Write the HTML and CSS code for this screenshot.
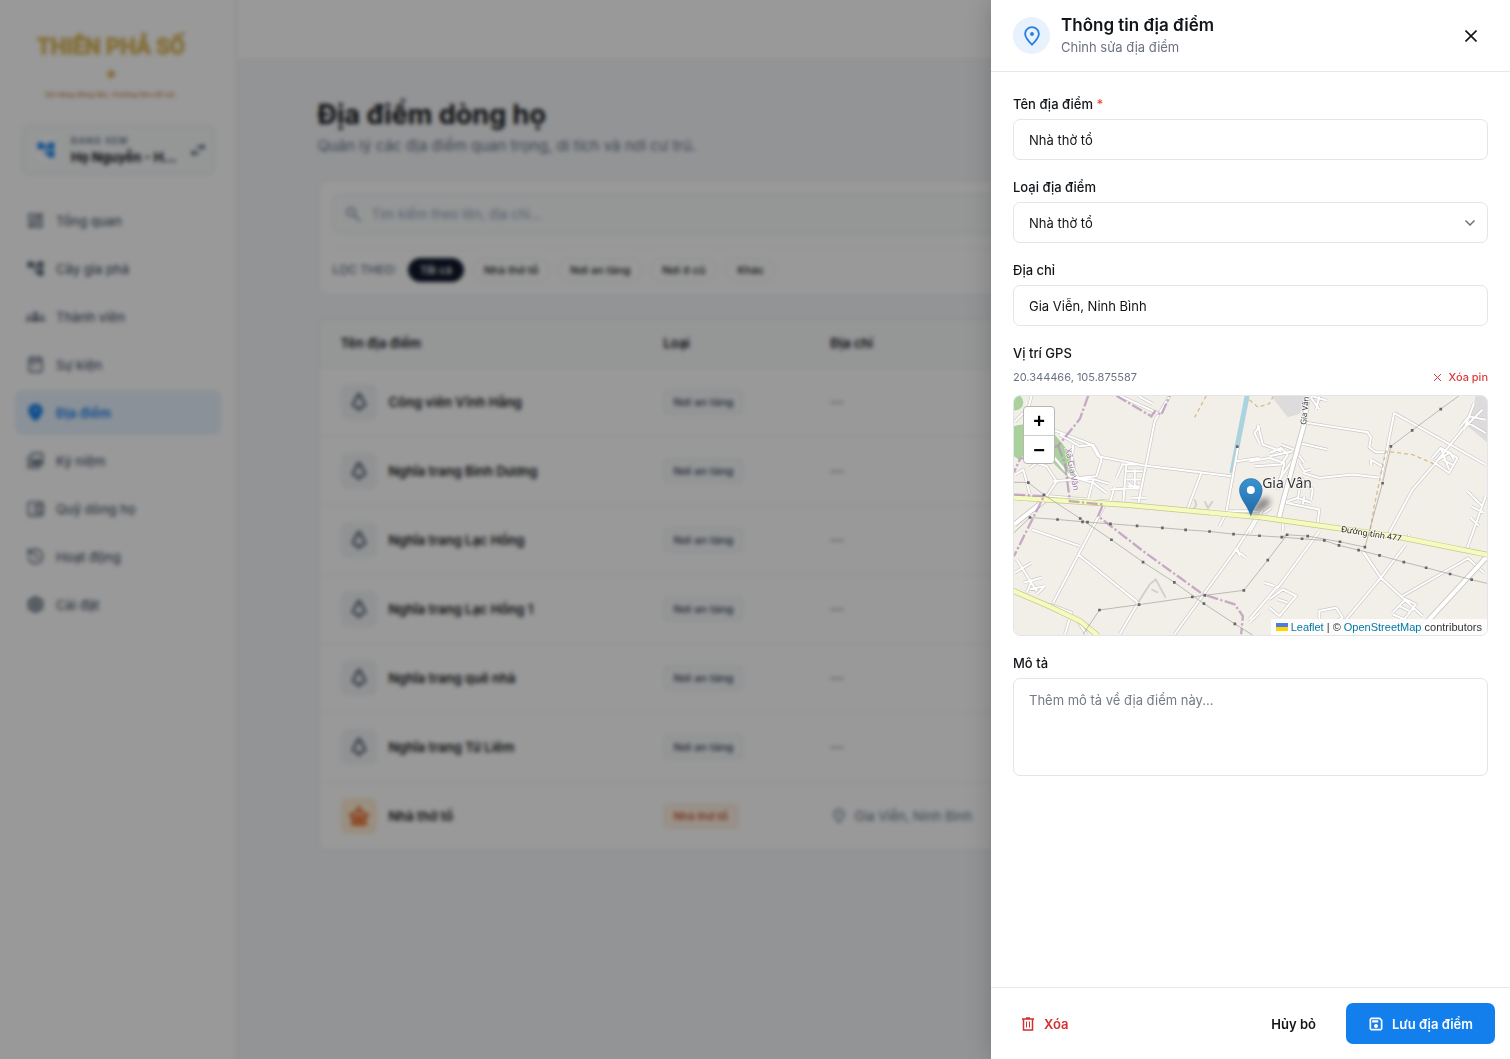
FILE: index.html
```html
<!DOCTYPE html>
<html lang="vi">
<head>
<meta charset="utf-8">
<meta name="viewport" content="width=device-width, initial-scale=1">
<title>Địa điểm dòng họ</title>
<link rel="stylesheet" href="styles.css">
</head>
<body>
<svg class="sprite" aria-hidden="true">
  <symbol id="i-tree" viewBox="0 0 24 24"><path fill="currentColor" d="M22 11V3h-7v3H9V3H2v8h7V8h2v10h4v3h7v-8h-7v3h-2V8h2v3h7z"/></symbol>
  <symbol id="i-grave" viewBox="0 0 24 24"><path fill="none" stroke="currentColor" stroke-width="2.4" stroke-linejoin="round" d="M12 3l4 5.500h-1l4 6.500-3.500 3h-7L5 15l4-6.500H8zM12 18v4"/></symbol>
  <symbol id="i-pin" viewBox="0 0 24 24"><path fill="none" stroke="currentColor" stroke-width="2" d="M12 21.500C7.500 17 4.500 13.500 4.500 9.800a7.500 7.500 0 0 1 15 0c0 3.700-3 7.200-7.500 11.700z"/><circle cx="12" cy="9.800" r="2.100" fill="currentColor"/></symbol>
</svg>

<div class="app">
  <aside class="sidebar">
    <div class="brand">
      <div class="brand-name">THIÊN PHẢ SỐ</div>
      <div class="brand-rule"><span>◆</span></div>
      <div class="brand-line">Sổ vàng dòng tộc, Trường tồn cõi số.</div>
    </div>
    <button class="clan" type="button">
      <span class="clan-icon"><svg width="20" height="20"><use href="#i-tree"/></svg></span>
      <span class="clan-text"><small>ĐANG XEM</small><strong>Họ Nguyễn - H...</strong></span>
      <svg width="14" height="14" viewBox="0 0 14 14" fill="none" stroke="currentColor" stroke-width="2"><path d="M6 4h7M11 2l2 2-2 2M8 10H1M3 8l-2 2 2 2"/></svg>
    </button>
    <nav class="nav">
      <a href="#"><svg viewBox="0 0 24 24"><path fill="currentColor" d="M19 5v2h-4V5h4M9 5v6H5V5h4m10 8v6h-4v-6h4M9 17v2H5v-2h4M21 3h-8v6h8V3zM11 3H3v10h8V3zm10 8h-8v10h8V11zm-10 4H3v6h8v-6z"/></svg>Tổng quan</a>
      <a href="#"><svg viewBox="0 0 24 24"><use href="#i-tree"/></svg>Cây gia phả</a>
      <a href="#"><svg viewBox="0 0 24 24"><path fill="currentColor" d="M12 6a3 3 0 1 1 0 6 3 3 0 0 1 0-6zM6 18v-2c0-2 3-3 6-3s6 1 6 3v2zM4 9a2 2 0 1 1 0 4 2 2 0 0 1 0-4zM0 18v-2c0-1.500 2-2 4.500-2v4zM20 9a2 2 0 1 1 0 4 2 2 0 0 1 0-4zM24 18v-2c0-1.500-2-2-4.500-2v4z"/></svg>Thành viên</a>
      <a href="#"><svg viewBox="0 0 24 24" fill="none" stroke="currentColor" stroke-width="2"><rect x="4" y="4" width="16" height="17" rx="1"/><path d="M4 8h16M8 1v4M16 1v4M8 13h5"/></svg>Sự kiện</a>
      <a href="#" class="active"><svg viewBox="0 0 24 24"><path fill="currentColor" fill-rule="evenodd" d="M12 1C7 1 3 5 3 10c0 6 9 13 9 13s9-7 9-13c0-5-4-9-9-9zm0 6a2 2 0 1 1 0 4 2 2 0 0 1 0-4z"/></svg>Địa điểm</a>
      <a href="#"><svg viewBox="0 0 24 24" fill="none" stroke="currentColor" stroke-width="2"><rect x="7" y="3" width="14" height="14" rx="1"/><path d="M3 6v15h15M9 15l3-4 2 2 2-3 3 5z"/></svg>Kỷ niệm</a>
      <a href="#"><svg viewBox="0 0 24 24" fill="none" stroke="currentColor" stroke-width="2"><rect x="3" y="4" width="18" height="17" rx="1"/><path d="M12 8h9v9h-9zM16 11v3"/></svg>Quỹ dòng họ</a>
      <a href="#"><svg viewBox="0 0 24 24" fill="none" stroke="currentColor" stroke-width="2"><path d="M3 12a9 9 0 1 0 3-7L3 8M3 2v6h6M12 7v5l4 3"/></svg>Hoạt động</a>
      <a href="#"><svg viewBox="0 0 24 24" fill="none" stroke="currentColor"><path stroke-width="3" d="M12 3l8 4.500v9L12 21l-8-4.500v-9z"/><circle cx="12" cy="12" r="3" stroke-width="3"/></svg>Cài đặt</a>
    </nav>
  </aside>

  <div class="page">
    <header class="topbar"></header>
    <main class="content">
      <h1>Địa điểm dòng họ</h1>
      <p class="lead">Quản lý các địa điểm quan trọng, di tích và nơi cư trú.</p>

      <section class="card filters">
        <label class="search">
          <svg width="16" height="16" viewBox="0 0 16 16" fill="none" stroke="currentColor" stroke-width="2"><circle cx="6" cy="6" r="4"/><path d="M9 9l6 6"/></svg>
          <input type="search" placeholder="Tìm kiếm theo tên, địa chỉ..." aria-label="Tìm kiếm">
        </label>
        <div class="chips">
          <span>LỌC THEO:</span>
          <button type="button" class="on">Tất cả</button>
          <button type="button">Nhà thờ tổ</button>
          <button type="button">Nơi an táng</button>
          <button type="button">Nơi ở cũ</button>
          <button type="button">Khác</button>
        </div>
      </section>

      <section class="card">
        <table class="places">
          <thead><tr><th class="c-name">Tên địa điểm</th><th class="c-type">Loại</th><th>Địa chỉ</th></tr></thead>
          <tbody>
            <tr><td><div class="name"><span class="tile"><svg width="22" height="22"><use href="#i-grave"/></svg></span>Công viên Vĩnh Hằng</div></td><td><span class="tag">Nơi an táng</span></td><td>—</td></tr>
            <tr><td><div class="name"><span class="tile"><svg width="22" height="22"><use href="#i-grave"/></svg></span>Nghĩa trang Bình Dương</div></td><td><span class="tag">Nơi an táng</span></td><td>—</td></tr>
            <tr><td><div class="name"><span class="tile"><svg width="22" height="22"><use href="#i-grave"/></svg></span>Nghĩa trang Lạc Hồng</div></td><td><span class="tag">Nơi an táng</span></td><td>—</td></tr>
            <tr><td><div class="name"><span class="tile"><svg width="22" height="22"><use href="#i-grave"/></svg></span>Nghĩa trang Lạc Hồng 1</div></td><td><span class="tag">Nơi an táng</span></td><td>—</td></tr>
            <tr><td><div class="name"><span class="tile"><svg width="22" height="22"><use href="#i-grave"/></svg></span>Nghĩa trang quê nhà</div></td><td><span class="tag">Nơi an táng</span></td><td>—</td></tr>
            <tr><td><div class="name"><span class="tile"><svg width="22" height="22"><use href="#i-grave"/></svg></span>Nghĩa trang Từ Liêm</div></td><td><span class="tag">Nơi an táng</span></td><td>—</td></tr>
            <tr><td><div class="name"><span class="tile warm"><svg width="22" height="22" viewBox="0 0 24 24" fill="none" stroke="currentColor" stroke-width="2.500"><path d="M1 11c4 0 8-3 11-8 3 5 7 8 11 8M5 11v10h14V11M5 14h14M12 8v6M9 21v-4h6v4"/></svg></span>Nhà thờ tổ</div></td><td><span class="tag warm">Nhà thờ tổ</span></td><td><div class="addr"><svg width="16" height="16"><use href="#i-pin"/></svg>Gia Viễn, Ninh Bình</div></td></tr>
          </tbody>
        </table>
      </section>
    </main>
  </div>
</div>

<div class="overlay"></div>

<form class="drawer" role="dialog" aria-labelledby="drawer-title">
  <header class="drawer-head">
    <span class="badge"><svg width="22" height="22"><use href="#i-pin"/></svg></span>
    <div class="drawer-titles">
      <h2 id="drawer-title">Thông tin địa điểm</h2>
      <p>Chỉnh sửa địa điểm</p>
    </div>
    <button class="close" type="button" aria-label="Đóng"><svg width="12" height="12" viewBox="0 0 12 12" stroke="currentColor" stroke-width="1.600"><path d="M.5.500l11 11M11.500.500l-11 11"/></svg></button>
  </header>

  <div class="drawer-body">
    <div class="field">
      <label for="name">Tên địa điểm <em>*</em></label>
      <input id="name" type="text" value="Nhà thờ tổ">
    </div>
    <div class="field">
      <label for="type">Loại địa điểm</label>
      <div class="select">
        <select id="type"><option>Nhà thờ tổ</option><option>Nơi an táng</option><option>Nơi ở cũ</option><option>Khác</option></select>
        <svg width="10" height="6" viewBox="0 0 10 6" fill="none" stroke="currentColor" stroke-width="1.500"><path d="M.5.500L5 5 9.500.500"/></svg>
      </div>
    </div>
    <div class="field">
      <label for="address">Địa chỉ</label>
      <input id="address" type="text" value="Gia Viễn, Ninh Bình">
    </div>
    <div class="field">
      <span class="label">Vị trí GPS</span>
      <div class="coords">
        <span>20.344466, 105.875587</span>
        <button type="button"><svg width="9" height="9" viewBox="0 0 9 9" stroke="currentColor"><path d="M1 1l7 7M8 1L1 8"/></svg>Xóa pin</button>
      </div>
      <div class="map">
        <svg class="map-canvas" viewBox="12 18 1422 720" preserveAspectRatio="xMidYMid slice" role="img" aria-label="Bản đồ Gia Vân">
          <defs>
            <linearGradient id="pinfill" x1="0" y1="0" x2="0" y2="1"><stop offset="0" stop-color="#3a94d0"/><stop offset="1" stop-color="#2268a8"/></linearGradient>
            <filter id="soft" x="-50%" y="-50%" width="200%" height="200%"><feGaussianBlur stdDeviation="9"/></filter>
            <g id="lanes" fill="none" stroke-linejoin="round">
              <path d="M65 18L55 55 15 95M60 235l20-15M80 220l30 10 30 45-30 45M15 255l25-15 20 75M115 115l130 50 20 35 140 28 165 20 95 12M150 135l60 35 40-5 25 45-15 50-55 5-20-40 5-60M130 200l50 60 70 20 40 30M130 275l60-5M205 265l45 5-15 60M248 268l50 15M340 220l-20 45M350 222l-10 125M335 225h55M345 245h55M350 270h45M355 290h35M300 300l90-5M315 290l-15 50M365 325h45M375 240v60M355 280l30 20M480 18L435 95 385 345M575 250l-40 105M330 18l120 55M385 18l45 25M685 175L650 370 630 410M680 215l70-10M750 110l-15 20 15 30M655 365h90M130 640L285 345M65 420l145 50M205 495l180 145M205 495l15-25M495 735L680 480 740 385M675 480l35 25M685 480l5 20M330 735L385 640M20 510l60 95M15 550l50-30M40 580l55-15M60 600l45-10M50 610l15-35M80 615l25-25M120 645l65 25-20 65M200 690l30 45M720 700l30-30M120 320l170 15 60 10 120 15"/>
              <g transform="translate(720 0)">
                <path d="M25 105l15 60 55 20M60 190l35-15 20 20-20 30-80 5M0 215l60-10 45 15-20 80M95 165l40 15 30 40M60 200l70-15M130 210l-40 60M150 220l15 25 20-5M160 250l50 15 100-10 90 10M155 265l35 35-5 30M100 340l45-15 40 15M145 330l5-30M110 340l100 20-5 40M160 345l5-25M180 18l30 40M185 18l50 15M200 60l10-40M150 160l85 20M165 98l190 30 10 15-5 30 20 15h25M365 210l35 20M365 212v15M435 70l-40 200M435 70L710 225M550 205l25-30 50 30-25 45-50-35M575 175l25 65M560 215l40-25M600 185l15 25M580 210l30 15M700 60l-60 60-85 105-65 75-70 130M635 110l25-30 50 10M645 120l30-80M650 95l60 35M0 690l85-100M60 630l40-30 40 20-50 60-30-25M85 630l30 10M75 590l-30-10M85 595l30-40 95-130M340 485l55 80 125 115M395 565l75-100M270 715L395 565M395 565L345 490M430 670l40-40 30 15-35 45-35-15M450 650l30 15M460 620l200-115M210 665l50-10 20 30-40 25-30-20zM655 475l55-155M655 305l45 45M665 350l40 20M665 385l25 25M655 505l50 45M100 395v30M0 430l40-70M45 370l20-15M475 455l5-20"/>
              </g>
            </g>
          </defs>
          <rect x="12" y="18" width="1422" height="720" fill="#f2efe9"/>
          <g fill="#a9d19b"><circle cx="16" cy="38" r="24"/><path d="M12 110q40-15 50 10l-15 70-20 20-15-10zM130 130l30 35 35 50 5 50-20 5-50-50-15-30z"/></g>
          <g fill="#dddbdc"><path d="M785 18h110l-25 55-35 10zM1400 18h34v140l-55-45z"/></g>
          <path d="M713 18L667 250" stroke="#aad3df" stroke-width="15"/>
          <use href="#lanes" stroke="#cbc9c7" stroke-width="10"/>
          <use href="#lanes" stroke="#fff" stroke-width="6"/>
          <g fill="none" stroke="#d4d1cd" stroke-width="6"><path d="M385 640l35-55 18-15 30 55M425 600l20 10M555 330l5 15-10 20M585 335l10 20 15-20"/></g>
          <g fill="none">
            <path d="M895 18l-12 90-60 220-15 60M12 405l95-75M1435 500l-220 240" stroke="#c8c6c3" stroke-width="17"/>
            <path d="M895 18l-12 90-60 220-15 60M12 405l95-75M1435 500l-220 240" stroke="#fff" stroke-width="12"/>
            <path d="M0 323L120 331 360 347 750 383 1160 441 1440 497M0 600L120 652 210 695 265 740" stroke="#c3c98a" stroke-width="17"/>
            <path d="M0 323L120 331 360 347 750 383 1160 441 1440 497M0 600L120 652 210 695 265 740" stroke="#f7fabf" stroke-width="13"/>
            <g stroke="#b592b8" stroke-width="7" stroke-dasharray="34 7 7 7" opacity=".75">
              <path d="M235 18l-25 70-65 80-115 40-18 40M320 18l105 62 10-15 20 10 25-57M145 170l20 50 15 115 100 10-15 35 135 105 180 130 95 30 25 35-5 55M12 315l90 5-40 80-50 100"/>
            </g>
            <g stroke="#d6bd91" stroke-width="4" stroke-dasharray="12 9"><path d="M590 18l-35 65M720 30l25 22 35-10 10-20M1080 440l15-90 35-165 80 10 70 30"/></g>
            <g stroke="#a29f9c" stroke-width="2">
              <path d="M12 278L55 279 102 316 211 387 305 451 400 518 494 579 583 643 676 704 730 738M12 430L60 384 143 390 233 398 302 403 382 409 458 415 528 421 600 426 672 434 750 439 817 443 878 448 945 453 989 468 1048 482 1111 498 1184 518 1251 535 1323 554 1388 571 1434 582M817 443L833 436 895 440 992 457 1067 473M220 735L269 662 388 646 548 623 586 618 703 603 775 512 833 436M1067 473L1120 281 1145 170 1209 122 1295 58 1350 18"/>
            </g>
            <path d="M51 279h8M98 316h8M207 387h8M301 451h8M396 518h8M490 579h8M579 643h8M672 704h8M56 384h8M139 390h8M214 397h8M229 398h8M298 403h8M378 409h8M454 415h8M524 421h8M596 426h8M668 434h8M746 439h8M813 443h8M874 448h8M941 453h8M985 468h8M1044 482h8M1107 498h8M1180 518h8M1247 535h8M1319 554h8M1384 571h8M265 662h8M384 646h8M544 623h8M582 618h8M699 603h8M771 512h8M829 436h8M891 440h8M988 457h8M1063 473h8M1116 281h8M1141 170h8M1205 122h8M1291 58h8M679 171h8" stroke="#666" stroke-width="8"/>
          </g>
          <g class="map-text">
            <text transform="translate(166 178) rotate(79)" font-size="26" fill="#9f79a4">Xã Gia Vân</text>
            <text transform="translate(890 106) rotate(-84)" font-size="24" fill="#333">Gia Vân</text>
            <text transform="translate(994 427) rotate(9)" font-size="25" fill="#222">Đường tỉnh 477</text>
            <text x="758" y="296" font-size="42" fill="#333">Gia Vân</text>
          </g>
          <path d="M724 375q8-30 30-46 28-10 28 8-8 25-58 38z" fill="#000" opacity=".45" filter="url(#soft)"/>
          <path d="M724 378C714 347 690 327 690 301a34 34 0 0 1 68 0c0 26-24 46-34 77z" fill="url(#pinfill)" stroke="#2a6fa8" stroke-width="2"/>
          <circle cx="724" cy="301" r="12" fill="#fff"/>
        </svg>
        <div class="zoom"><button type="button" aria-label="Phóng to">+</button><button type="button" aria-label="Thu nhỏ">−</button></div>
        <div class="credit"><svg width="12" height="8" viewBox="0 0 12 8"><path fill="#4c7be1" d="M0 0h12v4H0z"/><path fill="#ffd500" d="M0 4h12v4H0z"/></svg> <a href="#">Leaflet</a> | © <a href="#">OpenStreetMap</a> contributors</div>
      </div>
    </div>
    <div class="field">
      <label for="desc">Mô tả</label>
      <textarea id="desc" placeholder="Thêm mô tả về địa điểm này..."></textarea>
    </div>
  </div>

  <footer class="drawer-foot">
    <button type="button" class="btn danger"><svg width="14" height="14" viewBox="0 0 14 14" fill="none" stroke="currentColor"><path stroke-width="1.500" d="M1 2h12M5 1h4M2.500 2v11h9V2"/><path d="M5.500 4.500v6M8.500 4.500v6"/></svg>Xóa</button>
    <button type="button" class="btn plain">Hủy bỏ</button>
    <button type="submit" class="btn primary"><svg width="14" height="14" viewBox="0 0 14 14"><path fill="currentColor" fill-rule="evenodd" d="M2 .500h9L13.500 3v9l-1.500 1.500H2L.500 12V2zM2.200 2.200v9.600h9.600V3.700l-1.500-1.500zM3.200 3.200h6v2.400h-6zM7 7a2 2 0 1 1 0 4 2 2 0 0 1 0-4z"/></svg>Lưu địa điểm</button>
  </footer>
</form>
</body>
</html>
```
FILE: styles.css
```css
* { box-sizing: border-box; }
body {
  margin: 0;
  font: 13px/18px Inter, "Noto Sans", sans-serif;
  color: #111418;
  background: #f6f7f9;
}
button, input, select, textarea { font: inherit; color: inherit; }
button { background: none; border: 0; padding: 0; cursor: pointer; }
h1, h2, p { margin: 0; }
.sprite { display: none; }

/* App shell */
.app { display: flex; min-height: 100vh; }
.sidebar {
  flex: none;
  width: 237px;
  background: #fff;
  border-right: 1px solid #e2e8f0;
}
.brand {
  display: flex;
  flex-direction: column;
  align-items: center;
  height: 125px;
  padding: 33px 14px 0 0;
  font-family: Roboto, "Liberation Sans", sans-serif;
  font-weight: 700;
  white-space: nowrap;
}
.brand-name { font-size: 22px; line-height: 28px; color: #dcb85c; -webkit-text-stroke: 1px #dcb85c; }
.brand-rule { width: 152px; font-size: 11px; line-height: 26px; text-align: center; color: #dcae5c; }
.brand-line { font-size: 8px; line-height: 16px; color: #cc9a63; }
.clan {
  display: flex;
  align-items: center;
  width: 193px;
  height: 50px;
  margin: 0 22px 22px;
  padding: 0 9px;
  text-align: left;
  color: #475569;
  background: #f8fafb;
  border: 1px solid #e2e8ec;
  border-radius: 8px;
}
.clan-icon {
  display: grid;
  place-items: center;
  width: 28px;
  height: 28px;
  margin-right: 11px;
  color: #137fec;
  background: #fff;
  border-radius: 50%;
}
.clan-text { flex: 1; white-space: nowrap; }
.clan small { display: block; font-size: 9px; line-height: 14px; font-weight: 600; letter-spacing: 1px; color: #64748b; }
.clan strong { display: block; color: #111418; }
.nav { display: grid; gap: 3px; padding: 1px 15px; }
.nav a {
  display: flex;
  align-items: center;
  gap: 11px;
  height: 45px;
  padding: 0 11px;
  font-weight: 500;
  color: #526174;
  text-decoration: none;
  border-radius: 8px;
}
.nav svg { width: 19px; height: 19px; }
.nav a.active { color: #137fec; font-weight: 600; background: #e7f2fd; }
.page { flex: 1; min-width: 0; }
.topbar { height: 60px; background: #fff; border-bottom: 1px solid #e2e8f0; }
.content { max-width: 1156px; margin: 0 auto; padding: 37px 22px; }
h1 { font-size: 27px; line-height: 36px; font-weight: 700; }
.lead { padding: 3px 0 24px; font-size: 15px; line-height: 20px; color: #64748b; }
.card {
  overflow: hidden;
  background: #fff;
  border: 1px solid #e2e8ec;
  border-radius: 10px;
  margin-bottom: 22px;
}

/* Filters */
.filters { padding: 13px 14px; }
.search {
  display: flex;
  align-items: center;
  gap: 11px;
  height: 40px;
  padding: 0 11px;
  color: #94a3b8;
  background: #f8fafb;
  border: 1px solid #e2e8ec;
  border-radius: 8px;
}
.search input { flex: 1; padding: 0; border: 0; outline: 0; background: none; }
.search input::placeholder { color: #94a3b8; }
.chips {
  display: flex;
  align-items: center;
  gap: 8px;
  margin-top: 14px;
  padding-top: 9px;
  border-top: 1px solid #eef1f4;
  font-size: 11px;
}
.chips span { margin-right: 3px; font-size: 12px; font-weight: 500; color: #64748b; }
.chips button {
  height: 24px;
  padding: 0 11px;
  font-weight: 500;
  border: 1px solid #e8ecf0;
  border-radius: 12px;
}
.chips .on { color: #fff; background: #0f172a; border-color: #0f172a; }

/* Places table */
.places { width: 100%; border-collapse: collapse; table-layout: fixed; }
.c-name { width: 323px; }
.c-type { width: 167px; }
.places th { height: 48px; padding: 0 22px; text-align: left; font-weight: 600; background: #f8fafb; }
.places td { height: 69px; padding: 0 22px; color: #64748b; border-top: 1px solid #e8ecf0; }
.name { display: flex; align-items: center; gap: 12px; font-weight: 600; color: #111418; }
.tile { display: grid; place-items: center; width: 36px; height: 36px; color: #475569; background: #f1f4f6; border-radius: 7px; }
.tile.warm { color: #e8601c; background: #ffedd5; }
.tag {
  display: inline-block;
  padding: 2px 9px;
  font-size: 11px;
  font-weight: 500;
  color: #334155;
  background: #f8fafb;
  border: 1px solid #e2e8ec;
  border-radius: 4px;
}
.tag.warm { color: #c2410c; background: #fff3e6; border-color: #fbdcc0; }
.addr { display: flex; align-items: center; gap: 8px; }

/* Drawer */
.overlay { position: fixed; inset: 0; background: rgba(0, 0, 0, .4); backdrop-filter: blur(2px); }
.drawer {
  position: fixed;
  inset: 0 0 0 auto;
  display: flex;
  flex-direction: column;
  width: 519px;
  max-width: 100%;
  background: #fff;
  box-shadow: 0 0 24px rgba(0, 0, 0, .2);
}
.drawer-head {
  display: flex;
  align-items: center;
  gap: 11px;
  padding: 14px 22px;
  border-bottom: 1px solid #e5e8ec;
}
.badge { display: grid; place-items: center; width: 37px; height: 37px; color: #2a7fdc; background: #e7f2fd; border-radius: 50%; }
.drawer-titles { flex: 1; }
h2 { font-size: 17px; line-height: 23px; font-weight: 600; }
.drawer-titles p { line-height: 20px; color: #6b7280; }
.close { display: grid; place-items: center; width: 34px; height: 34px; }
.drawer-body { flex: 1; display: flex; flex-direction: column; gap: 18px; padding: 23px 22px; overflow: auto; }
.field { display: flex; flex-direction: column; gap: 6px; }
.field label, .label { font-weight: 500; }
.field em { font-style: normal; color: #ef4444; }
.field input, .field select, .field textarea {
  width: 100%;
  height: 41px;
  padding: 0 15px;
  background: #fff;
  border: 1px solid #e2e5ea;
  border-radius: 7px;
  outline: 0;
}
.field textarea { display: block; height: 98px; padding: 12px 15px; resize: none; }
.field textarea::placeholder { color: #757b85; }
.select { display: grid; align-items: center; }
.select > * { grid-area: 1 / 1; }
.select select { appearance: none; }
.select svg { justify-self: end; margin-right: 13px; color: #6b7280; pointer-events: none; }
.coords { display: flex; justify-content: space-between; font-size: 11px; color: #6b7280; }
.coords button { display: flex; align-items: center; gap: 6px; font-weight: 500; color: #dc3b3b; }
.map {
  position: relative;
  height: 241px;
  margin-top: 3px;
  overflow: hidden;
  border: 1px solid #e2e5ea;
  border-radius: 7px;
}
.map-canvas { display: block; width: 100%; height: 100%; }
.map-text { font-family: "Noto Sans", sans-serif; }
.map-text text { paint-order: stroke; stroke: rgba(255, 255, 255, .6); stroke-width: 5px; }
.zoom {
  position: absolute;
  top: 10px;
  left: 9px;
  width: 32px;
  overflow: hidden;
  background: #fff;
  border: 1px solid #b9b7b3;
  border-radius: 4px;
}
.zoom button { display: block; width: 100%; height: 28px; font: 700 20px/28px "Liberation Sans", sans-serif; color: #000; }
.zoom button + button { border-top: 1px solid #ccc; }
.credit {
  position: absolute;
  right: 0;
  bottom: 0;
  padding: 0 5px;
  font: 11px/16px "Liberation Sans", Arial, sans-serif;
  color: #333;
  background: rgba(255, 255, 255, .8);
}
.credit a { color: #0078a8; text-decoration: none; }
.drawer-foot { display: flex; align-items: center; padding: 15px; border-top: 1px solid #e5e8ec; }
.btn { display: flex; align-items: center; justify-content: center; gap: 9px; height: 41px; font-weight: 600; border-radius: 7px; }
.danger { margin-right: auto; padding: 0 15px; color: #d32f2f; }
.plain { padding: 0 30px; }
.primary { padding: 0 22px 0 23px; color: #fff; background: #137fec; }
```
